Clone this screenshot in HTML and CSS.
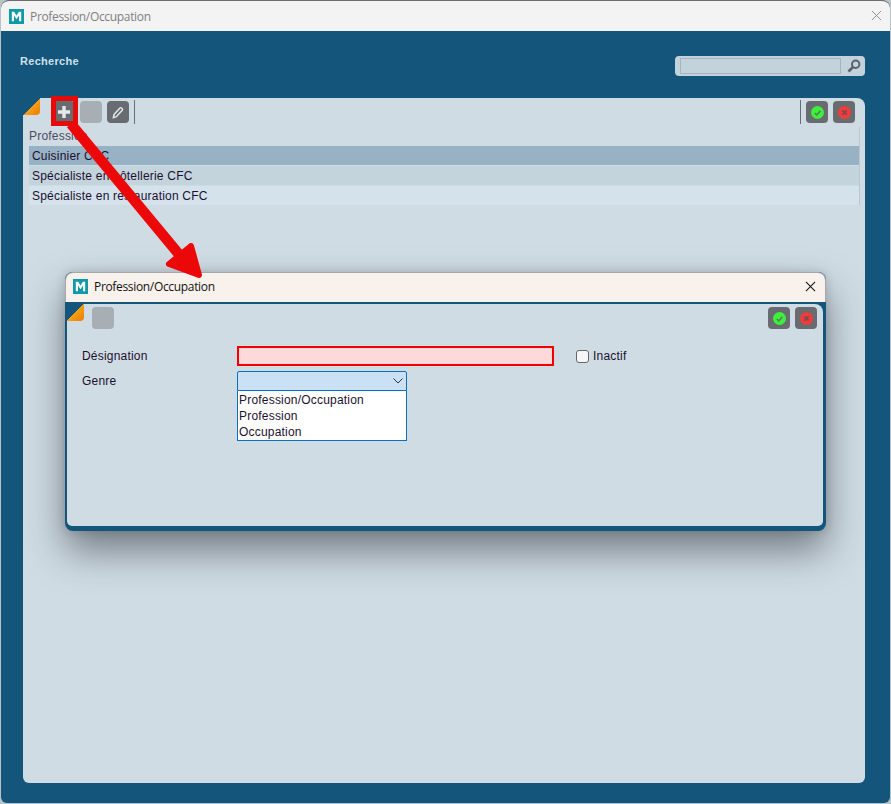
FILE: index.html
```html
<!DOCTYPE html>
<html lang="fr">
<head>
<meta charset="utf-8">
<title>Profession/Occupation</title>
<link rel="stylesheet" href="styles.css">
</head>
<body>
<div class="window">
  <header class="titlebar">
    <svg class="logo" viewBox="0 0 16 16"><rect width="16" height="16" fill="#0f9aa8"/><path d="M3 13V3h2.500L8 7l2.500-4H13v10h-2.300V7L8 11 5.300 7v6z" fill="#fff"/></svg>
    <span class="title muted">Profession/Occupation</span>
    <svg class="close" viewBox="0 0 12 12"><path d="M1 1l10 10M11 1L1 11" stroke="#8a8a8a" fill="none"/></svg>
  </header>
  <main class="content">
    <div class="searchbar">
      <h1 class="heading">Recherche</h1>
      <div class="search">
        <span class="search-input"></span>
        <svg class="loupe" viewBox="0 0 14 14"><circle cx="8.700" cy="5.300" r="3.700" fill="none" stroke="#5a6268" stroke-width="2"/><path d="M6 8L1.500 12.500" stroke="#5a6268" stroke-width="2.600"/></svg>
      </div>
    </div>
    <section class="panel">
      <span class="fold"></span>
      <div class="toolbar">
        <button class="tool"><svg viewBox="0 0 22 22"><path d="M11 5v12M5 11h12" stroke="#e4e8ea" stroke-width="3.400"/></svg></button>
        <button class="tool off"></button>
        <button class="tool"><svg viewBox="0 0 22 22"><path d="M7 13.500l6-6.500c1-1 3.300 1 2.300 2.200l-6 6.500-2.900.9z" fill="none" stroke="#e4e8ea" stroke-width="1.500"/></svg></button>
        <span class="sep"></span>
        <span class="spacer"></span>
        <span class="sep"></span>
        <button class="tool"><span class="dot green"><svg viewBox="0 0 12 12"><path d="M3.500 6.500l1.800 1.700 3.300-3.700" fill="none" stroke="#5d7a5d" stroke-width="1.400"/></svg></span></button>
        <button class="tool"><span class="dot red"><svg viewBox="0 0 12 12"><path d="M4 4l4 4M8 4l-4 4" fill="none" stroke="#7a4a55" stroke-width="1.700"/></svg></span></button>
      </div>
      <div class="table">
        <div class="col-head">Profession</div>
        <div class="row selected">Cuisinier CFC</div>
        <div class="row even">Spécialiste en hôtellerie CFC</div>
        <div class="row odd">Spécialiste en restauration CFC</div>
      </div>
    </section>
  </main>
</div>

<div class="dialog">
  <header class="dialog-title">
    <svg class="logo" viewBox="0 0 16 16"><rect width="16" height="16" fill="#0f9aa8"/><path d="M3 13V3h2.500L8 7l2.500-4H13v10h-2.300V7L8 11 5.300 7v6z" fill="#fff"/></svg>
    <span class="title">Profession/Occupation</span>
    <svg class="close" viewBox="0 0 12 12"><path d="M1 1l10 10M11 1L1 11" stroke="#111" fill="none" stroke-width="1.100"/></svg>
  </header>
  <div class="dialog-body">
    <span class="fold"></span>
    <div class="dialog-tools">
      <button class="tool off"></button>
      <span class="spacer"></span>
      <button class="tool"><span class="dot green"><svg viewBox="0 0 12 12"><path d="M3.500 6.500l1.800 1.700 3.300-3.700" fill="none" stroke="#5d7a5d" stroke-width="1.400"/></svg></span></button>
      <button class="tool"><span class="dot red"><svg viewBox="0 0 12 12"><path d="M4 4l4 4M8 4l-4 4" fill="none" stroke="#7a4a55" stroke-width="1.700"/></svg></span></button>
    </div>
    <div class="form">
      <div class="form-row">
        <label class="label">Désignation</label>
        <span class="text-field"></span>
        <span class="checkbox"></span>
        <span class="check-label">Inactif</span>
      </div>
      <div class="form-row second">
        <label class="label">Genre</label>
        <div class="select">
          <div class="select-box"><svg viewBox="0 0 10 6"><path d="M.5.500L5 5 9.500.500" fill="none" stroke="#333"/></svg></div>
          <ul class="options">
            <li>Profession/Occupation</li>
            <li>Profession</li>
            <li>Occupation</li>
          </ul>
        </div>
      </div>
    </div>
  </div>
</div>

<div class="marker"></div>
<svg class="arrow" viewBox="0 0 891 804">
  <path d="M71 124L192 270" fill="none" stroke="#ec0808" stroke-width="10.500"/>
  <path d="M169 264L199 275 191 246z" fill="#ec0808" stroke="#ec0808" stroke-width="6" stroke-linejoin="round"/>
</svg>
</body>
</html>
```
FILE: styles.css
```css
* { box-sizing: border-box; }
html, body { margin: 0; height: 804px; overflow: hidden; background: #b9c3c6; }
body { position: relative; font-family: "Liberation Sans", Arial, sans-serif; font-size: 12px; color: #1c1030; letter-spacing: .2px; }

.window { margin: 0 0 0 1px; width: 889px; height: 803px; border-top: 1px solid #6d6d6d; border-radius: 8px 8px 6px 6px; overflow: hidden; display: flex; flex-direction: column; background: #14557b; }
.titlebar { flex: 0 0 30px; display: flex; align-items: center; background: #f3f3f3; padding: 0 8px 0 8px; }
.logo { width: 15px; height: 15px; flex: none; }
.title { margin-left: 6px; font-family: "Open Sans", sans-serif; font-size: 12px; letter-spacing: -.33px; color: #111; flex: 1; }
.title.muted { color: #7f7f7f; }
.close { width: 10px; height: 10px; flex: none; }
.titlebar .close { width: 11px; height: 11px; margin-bottom: 2px; }

.content { flex: 1; display: flex; flex-direction: column; padding: 0 25px 20px 22px; }
.searchbar { flex: 0 0 67px; display: flex; justify-content: space-between; align-items: flex-start; }
.heading { margin: 24px 0 0 -3px; font-size: 11px; font-weight: bold; letter-spacing: .3px; color: #cfe0ea; line-height: 13px; }
.search { margin-top: 25px; width: 190px; height: 20px; background: #c3d3dc; border-radius: 4px; display: flex; align-items: center; padding: 0 3px 0 5px; }
.search-input { width: 161px; height: 16px; border: 1px solid #a8b4bc; }
.loupe { width: 14px; height: 14px; margin-left: 6px; }

.panel { position: relative; flex: 1; background: #d0dce4; border-radius: 6px 8px 6px 6px; padding: 3px 5px 0 6px; }
.fold { position: absolute; left: 0; top: 0; width: 17px; height: 17px; background: linear-gradient(135deg, #14557b 50%, #f8a013 50%, #ee7a00); border-bottom-right-radius: 4px; }
.toolbar { display: flex; align-items: center; gap: 5px; height: 22px; padding: 0 5px 0 24px; }
.tool { width: 22px; height: 22px; padding: 0; border: 0; border-radius: 4px; background: #686c70; display: flex; align-items: center; justify-content: center; flex: none; }
.tool svg { width: 22px; height: 22px; display: block; }
.tool.off { background: #a7afb5; }
.sep { width: 1px; height: 24px; background: #686c70; }
.spacer { flex: 1; }
.dot { width: 13px; height: 13px; border-radius: 50%; display: block; }
.tool .dot svg { width: 13px; height: 13px; }
.dot.green { background: #3cf03c; }
.dot.red { background: #f53a3a; }

.table { margin-top: 4px; border-right: 1px solid #b9c6ce; }
.col-head { height: 19px; line-height: 19px; color: #4e4a60; }
.row { height: 19px; margin-bottom: 1px; line-height: 20px; padding-left: 3px; }
.row.selected { background: #97b2c4; }
.row.even { background: #c4d4dc; }
.row.odd { background: #d4e2ec; }

.dialog { position: absolute; left: 65px; top: 272px; width: 761px; height: 259px; border-radius: 8px; background: #14557b; box-shadow: 0 20px 38px rgba(40, 45, 55, .55), 0 0 10px rgba(40, 45, 55, .2); display: flex; flex-direction: column; overflow: hidden; }
.dialog-title { flex: 0 0 30px; display: flex; align-items: center; padding: 0 9px 2px 7px; background: #f9f1ec; border: 1px solid #a5a8aa; border-bottom: 0; border-radius: 8px 8px 0 0; }
.dialog-title .close { width: 11px; height: 11px; }
.dialog-body { position: relative; flex: 1; margin: 2px 3px 5px 2px; background: #d0dce4; border-radius: 0 8px 5px 5px; }
.dialog-tools { display: flex; align-items: center; gap: 5px; height: 22px; margin-top: 3px; padding: 0 6px 0 25px; }
.form { padding: 17px 0 0 15px; }
.form-row { display: flex; align-items: flex-start; }
.form-row.second { margin-top: 5px; }
.label { width: 155px; line-height: 20px; }
.text-field { width: 317px; height: 20px; background: #fdd9d9; border: 2px solid #f00000; }
.checkbox { width: 13px; height: 13px; margin: 4px 4px 0 22px; background: #f6f6f6; border: 1px solid #666; border-radius: 3px; }
.check-label { line-height: 20px; }
.select { width: 170px; }
.select-box { height: 20px; background: #c9e0f5; border: 1px solid #0a6fc2; border-radius: 2px 2px 0 0; display: flex; align-items: center; justify-content: flex-end; padding-right: 3px; }
.select-box svg { width: 10px; height: 6px; }
.options { list-style: none; margin: 0; padding: 1px 0 0 1px; height: 50px; background: #fff; border: 1px solid #0a6fc2; border-top: 0; }
.options li { height: 16px; line-height: 16px; }

.marker { position: absolute; left: 51px; top: 96px; width: 27px; height: 30px; border: 5px solid #e50b0b; }
.arrow { position: absolute; left: 0; top: 0; width: 891px; height: 804px; pointer-events: none; }
```
